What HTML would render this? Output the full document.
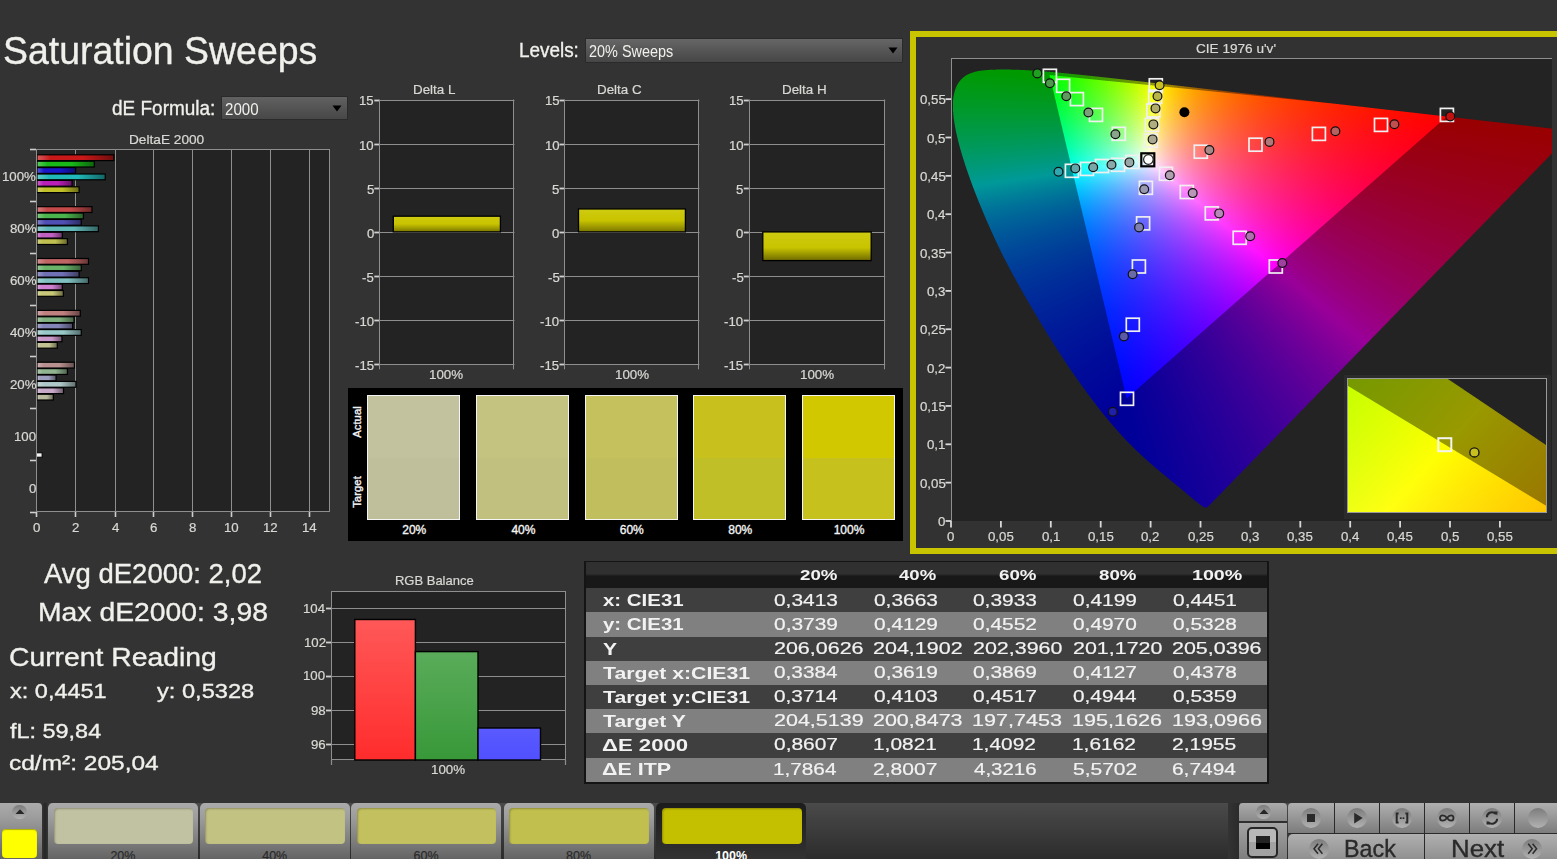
<!DOCTYPE html>
<html><head><meta charset="utf-8"><style>
*{margin:0;padding:0;box-sizing:border-box}
html,body{width:1557px;height:859px;overflow:hidden;background:#333333;font-family:"Liberation Sans", sans-serif;position:relative}
.t{position:absolute;white-space:nowrap}
.b{-webkit-text-stroke:0.35px currentColor}
.b2{-webkit-text-stroke:0.2px currentColor}
</style></head>
<body>
<div class="t b" style="left:2.52px;top:32.19px;font-size:38.52px;line-height:38.52px;color:#f0f0ec;font-weight:normal;transform:scaleX(0.9720);transform-origin:0 0;">Saturation Sweeps</div>
<div class="t b" style="left:111.74px;top:97.65px;font-size:20.49px;line-height:20.49px;color:#f0f0ec;font-weight:normal;transform:scaleX(0.9264);transform-origin:0 0;">dE Formula:</div>
<div style="position:absolute;left:220.50px;top:95.50px;width:127.00px;height:24.00px;background:linear-gradient(#616161,#474747);border:1px solid #2a2a2a;"></div>
<div class="t " style="left:224.75px;top:100.80px;font-size:16.42px;line-height:16.42px;color:#f0f0ec;font-weight:normal;transform:scaleX(0.9190);transform-origin:0 0;">2000</div>
<svg style="position:absolute;left:332px;top:104.5px" width="10" height="7"><path d="M0.5 0.5H9.5L5 6.5Z" fill="#000"/></svg>
<div class="t b" style="left:519.49px;top:40.00px;font-size:20.20px;line-height:20.20px;color:#f0f0ec;font-weight:normal;transform:scaleX(0.9355);transform-origin:0 0;">Levels:</div>
<div style="position:absolute;left:585.00px;top:38.00px;width:318.00px;height:25.00px;background:linear-gradient(#666,#464646);border:1px solid #2a2a2a;"></div>
<div class="t " style="left:588.78px;top:43.81px;font-size:15.70px;line-height:15.70px;color:#f0f0ec;font-weight:normal;transform:scaleX(0.9195);transform-origin:0 0;">20% Sweeps</div>
<svg style="position:absolute;left:888px;top:47px" width="10" height="7"><path d="M0.5 0.5H9.5L5 6.5Z" fill="#000"/></svg>
<div class="t b2" style="left:128.61px;top:134.17px;font-size:12.79px;line-height:12.79px;color:#d8d8d4;font-weight:normal;transform:scaleX(1.0690);transform-origin:0 0;">DeltaE 2000</div>
<div style="position:absolute;left:36.00px;top:149.00px;width:294.00px;height:363.00px;background:#232323;"></div>
<svg style="position:absolute;left:0;top:0" width="1557" height="600">
<defs><linearGradient id="g00" x1="0" x2="1" y1="0" y2="0"><stop offset="0" stop-color="#d85d5d"/><stop offset="0.18" stop-color="#c81818"/><stop offset="0.6" stop-color="#c81818"/><stop offset="1" stop-color="#6e0d0d"/></linearGradient><linearGradient id="g01" x1="0" x2="1" y1="0" y2="0"><stop offset="0" stop-color="#5dcd5d"/><stop offset="0.18" stop-color="#18b818"/><stop offset="0.6" stop-color="#18b818"/><stop offset="1" stop-color="#0d650d"/></linearGradient><linearGradient id="g02" x1="0" x2="1" y1="0" y2="0"><stop offset="0" stop-color="#5d5dd8"/><stop offset="0.18" stop-color="#1818c8"/><stop offset="0.6" stop-color="#1818c8"/><stop offset="1" stop-color="#0d0d6e"/></linearGradient><linearGradient id="g03" x1="0" x2="1" y1="0" y2="0"><stop offset="0" stop-color="#63cdcd"/><stop offset="0.18" stop-color="#20b8b8"/><stop offset="0.6" stop-color="#20b8b8"/><stop offset="1" stop-color="#126565"/></linearGradient><linearGradient id="g04" x1="0" x2="1" y1="0" y2="0"><stop offset="0" stop-color="#cd63cd"/><stop offset="0.18" stop-color="#b820b8"/><stop offset="0.6" stop-color="#b820b8"/><stop offset="1" stop-color="#651265"/></linearGradient><linearGradient id="g05" x1="0" x2="1" y1="0" y2="0"><stop offset="0" stop-color="#d3d368"/><stop offset="0.18" stop-color="#c0c028"/><stop offset="0.6" stop-color="#c0c028"/><stop offset="1" stop-color="#6a6a16"/></linearGradient><linearGradient id="g10" x1="0" x2="1" y1="0" y2="0"><stop offset="0" stop-color="#d68080"/><stop offset="0.18" stop-color="#c44a4a"/><stop offset="0.6" stop-color="#c44a4a"/><stop offset="1" stop-color="#6c2929"/></linearGradient><linearGradient id="g11" x1="0" x2="1" y1="0" y2="0"><stop offset="0" stop-color="#82ca82"/><stop offset="0.18" stop-color="#4cb44c"/><stop offset="0.6" stop-color="#4cb44c"/><stop offset="1" stop-color="#2a632a"/></linearGradient><linearGradient id="g12" x1="0" x2="1" y1="0" y2="0"><stop offset="0" stop-color="#8484ca"/><stop offset="0.18" stop-color="#5050b4"/><stop offset="0.6" stop-color="#5050b4"/><stop offset="1" stop-color="#2c2c63"/></linearGradient><linearGradient id="g13" x1="0" x2="1" y1="0" y2="0"><stop offset="0" stop-color="#90cdcd"/><stop offset="0.18" stop-color="#60b8b8"/><stop offset="0.6" stop-color="#60b8b8"/><stop offset="1" stop-color="#356565"/></linearGradient><linearGradient id="g14" x1="0" x2="1" y1="0" y2="0"><stop offset="0" stop-color="#d390d3"/><stop offset="0.18" stop-color="#c060c0"/><stop offset="0.6" stop-color="#c060c0"/><stop offset="1" stop-color="#6a356a"/></linearGradient><linearGradient id="g15" x1="0" x2="1" y1="0" y2="0"><stop offset="0" stop-color="#d3d384"/><stop offset="0.18" stop-color="#c0c050"/><stop offset="0.6" stop-color="#c0c050"/><stop offset="1" stop-color="#6a6a2c"/></linearGradient><linearGradient id="g20" x1="0" x2="1" y1="0" y2="0"><stop offset="0" stop-color="#d39292"/><stop offset="0.18" stop-color="#c06464"/><stop offset="0.6" stop-color="#c06464"/><stop offset="1" stop-color="#6a3737"/></linearGradient><linearGradient id="g21" x1="0" x2="1" y1="0" y2="0"><stop offset="0" stop-color="#97ca97"/><stop offset="0.18" stop-color="#6ab46a"/><stop offset="0.6" stop-color="#6ab46a"/><stop offset="1" stop-color="#3a633a"/></linearGradient><linearGradient id="g22" x1="0" x2="1" y1="0" y2="0"><stop offset="0" stop-color="#9b9bca"/><stop offset="0.18" stop-color="#7070b4"/><stop offset="0.6" stop-color="#7070b4"/><stop offset="1" stop-color="#3e3e63"/></linearGradient><linearGradient id="g23" x1="0" x2="1" y1="0" y2="0"><stop offset="0" stop-color="#a6d3d3"/><stop offset="0.18" stop-color="#80c0c0"/><stop offset="0.6" stop-color="#80c0c0"/><stop offset="1" stop-color="#466a6a"/></linearGradient><linearGradient id="g24" x1="0" x2="1" y1="0" y2="0"><stop offset="0" stop-color="#dea6de"/><stop offset="0.18" stop-color="#d080d0"/><stop offset="0.6" stop-color="#d080d0"/><stop offset="1" stop-color="#724672"/></linearGradient><linearGradient id="g25" x1="0" x2="1" y1="0" y2="0"><stop offset="0" stop-color="#d8d8a0"/><stop offset="0.18" stop-color="#c8c878"/><stop offset="0.6" stop-color="#c8c878"/><stop offset="1" stop-color="#6e6e42"/></linearGradient><linearGradient id="g30" x1="0" x2="1" y1="0" y2="0"><stop offset="0" stop-color="#d3a6a6"/><stop offset="0.18" stop-color="#c08080"/><stop offset="0.6" stop-color="#c08080"/><stop offset="1" stop-color="#6a4646"/></linearGradient><linearGradient id="g31" x1="0" x2="1" y1="0" y2="0"><stop offset="0" stop-color="#a6c8a6"/><stop offset="0.18" stop-color="#80b080"/><stop offset="0.6" stop-color="#80b080"/><stop offset="1" stop-color="#466146"/></linearGradient><linearGradient id="g32" x1="0" x2="1" y1="0" y2="0"><stop offset="0" stop-color="#a9a9cd"/><stop offset="0.18" stop-color="#8484b8"/><stop offset="0.6" stop-color="#8484b8"/><stop offset="1" stop-color="#494965"/></linearGradient><linearGradient id="g33" x1="0" x2="1" y1="0" y2="0"><stop offset="0" stop-color="#b7d8d8"/><stop offset="0.18" stop-color="#98c8c8"/><stop offset="0.6" stop-color="#98c8c8"/><stop offset="1" stop-color="#546e6e"/></linearGradient><linearGradient id="g34" x1="0" x2="1" y1="0" y2="0"><stop offset="0" stop-color="#d8b7d8"/><stop offset="0.18" stop-color="#c898c8"/><stop offset="0.6" stop-color="#c898c8"/><stop offset="1" stop-color="#6e546e"/></linearGradient><linearGradient id="g35" x1="0" x2="1" y1="0" y2="0"><stop offset="0" stop-color="#d3d3b1"/><stop offset="0.18" stop-color="#c0c090"/><stop offset="0.6" stop-color="#c0c090"/><stop offset="1" stop-color="#6a6a4f"/></linearGradient><linearGradient id="g40" x1="0" x2="1" y1="0" y2="0"><stop offset="0" stop-color="#cdb1b1"/><stop offset="0.18" stop-color="#b89090"/><stop offset="0.6" stop-color="#b89090"/><stop offset="1" stop-color="#654f4f"/></linearGradient><linearGradient id="g41" x1="0" x2="1" y1="0" y2="0"><stop offset="0" stop-color="#b1cab1"/><stop offset="0.18" stop-color="#90b490"/><stop offset="0.6" stop-color="#90b490"/><stop offset="1" stop-color="#4f634f"/></linearGradient><linearGradient id="g42" x1="0" x2="1" y1="0" y2="0"><stop offset="0" stop-color="#babad0"/><stop offset="0.18" stop-color="#9c9cbc"/><stop offset="0.6" stop-color="#9c9cbc"/><stop offset="1" stop-color="#565667"/></linearGradient><linearGradient id="g43" x1="0" x2="1" y1="0" y2="0"><stop offset="0" stop-color="#c8d8d8"/><stop offset="0.18" stop-color="#b0c8c8"/><stop offset="0.6" stop-color="#b0c8c8"/><stop offset="1" stop-color="#616e6e"/></linearGradient><linearGradient id="g44" x1="0" x2="1" y1="0" y2="0"><stop offset="0" stop-color="#d8c2d8"/><stop offset="0.18" stop-color="#c8a8c8"/><stop offset="0.6" stop-color="#c8a8c8"/><stop offset="1" stop-color="#6e5c6e"/></linearGradient><linearGradient id="g45" x1="0" x2="1" y1="0" y2="0"><stop offset="0" stop-color="#cdcdba"/><stop offset="0.18" stop-color="#b8b89c"/><stop offset="0.6" stop-color="#b8b89c"/><stop offset="1" stop-color="#656556"/></linearGradient></defs>
<line x1="75.5" y1="149" x2="75.5" y2="512" stroke="#8e8e8e" stroke-width="1"/>
<line x1="115.5" y1="149" x2="115.5" y2="512" stroke="#8e8e8e" stroke-width="1"/>
<line x1="153.5" y1="149" x2="153.5" y2="512" stroke="#8e8e8e" stroke-width="1"/>
<line x1="192.5" y1="149" x2="192.5" y2="512" stroke="#8e8e8e" stroke-width="1"/>
<line x1="231.5" y1="149" x2="231.5" y2="512" stroke="#8e8e8e" stroke-width="1"/>
<line x1="270.5" y1="149" x2="270.5" y2="512" stroke="#8e8e8e" stroke-width="1"/>
<line x1="309.5" y1="149" x2="309.5" y2="512" stroke="#8e8e8e" stroke-width="1"/>
<rect x="36.5" y="149.5" width="293" height="362" fill="none" stroke="#8e8e8e" stroke-width="1"/>
<line x1="30" y1="149.5" x2="36" y2="149.5" stroke="#cfcfcf" stroke-width="1.6"/>
<line x1="30" y1="201.5" x2="36" y2="201.5" stroke="#cfcfcf" stroke-width="1.6"/>
<line x1="30" y1="253.5" x2="36" y2="253.5" stroke="#cfcfcf" stroke-width="1.6"/>
<line x1="30" y1="305.5" x2="36" y2="305.5" stroke="#cfcfcf" stroke-width="1.6"/>
<line x1="30" y1="356.5" x2="36" y2="356.5" stroke="#cfcfcf" stroke-width="1.6"/>
<line x1="30" y1="408.5" x2="36" y2="408.5" stroke="#cfcfcf" stroke-width="1.6"/>
<line x1="30" y1="460.5" x2="36" y2="460.5" stroke="#cfcfcf" stroke-width="1.6"/>
<line x1="30" y1="512.5" x2="36" y2="512.5" stroke="#cfcfcf" stroke-width="1.6"/>
<line x1="36.5" y1="512" x2="36.5" y2="517" stroke="#cfcfcf" stroke-width="1.6"/>
<line x1="75.5" y1="512" x2="75.5" y2="517" stroke="#cfcfcf" stroke-width="1.6"/>
<line x1="115.5" y1="512" x2="115.5" y2="517" stroke="#cfcfcf" stroke-width="1.6"/>
<line x1="153.5" y1="512" x2="153.5" y2="517" stroke="#cfcfcf" stroke-width="1.6"/>
<line x1="192.5" y1="512" x2="192.5" y2="517" stroke="#cfcfcf" stroke-width="1.6"/>
<line x1="231.5" y1="512" x2="231.5" y2="517" stroke="#cfcfcf" stroke-width="1.6"/>
<line x1="270.5" y1="512" x2="270.5" y2="517" stroke="#cfcfcf" stroke-width="1.6"/>
<line x1="309.5" y1="512" x2="309.5" y2="517" stroke="#cfcfcf" stroke-width="1.6"/>
<rect x="37.0" y="154.80" width="76.83" height="5.80" fill="url(#g00)" stroke="#000" stroke-width="1.2"/>
<rect x="37.0" y="161.20" width="57.33" height="5.80" fill="url(#g01)" stroke="#000" stroke-width="1.2"/>
<rect x="37.0" y="167.60" width="38.61" height="5.80" fill="url(#g02)" stroke="#000" stroke-width="1.2"/>
<rect x="37.0" y="174.00" width="68.25" height="5.80" fill="url(#g03)" stroke="#000" stroke-width="1.2"/>
<rect x="37.0" y="180.40" width="35.10" height="5.80" fill="url(#g04)" stroke="#000" stroke-width="1.2"/>
<rect x="37.0" y="186.80" width="42.12" height="5.80" fill="url(#g05)" stroke="#000" stroke-width="1.2"/>
<rect x="37.0" y="206.66" width="54.99" height="5.80" fill="url(#g10)" stroke="#000" stroke-width="1.2"/>
<rect x="37.0" y="213.06" width="46.41" height="5.80" fill="url(#g11)" stroke="#000" stroke-width="1.2"/>
<rect x="37.0" y="219.46" width="44.27" height="5.80" fill="url(#g12)" stroke="#000" stroke-width="1.2"/>
<rect x="37.0" y="225.86" width="61.42" height="5.80" fill="url(#g13)" stroke="#000" stroke-width="1.2"/>
<rect x="37.0" y="232.26" width="25.35" height="5.80" fill="url(#g14)" stroke="#000" stroke-width="1.2"/>
<rect x="37.0" y="238.66" width="30.42" height="5.80" fill="url(#g15)" stroke="#000" stroke-width="1.2"/>
<rect x="37.0" y="258.51" width="51.48" height="5.80" fill="url(#g20)" stroke="#000" stroke-width="1.2"/>
<rect x="37.0" y="264.91" width="44.27" height="5.80" fill="url(#g21)" stroke="#000" stroke-width="1.2"/>
<rect x="37.0" y="271.31" width="42.12" height="5.80" fill="url(#g22)" stroke="#000" stroke-width="1.2"/>
<rect x="37.0" y="277.71" width="51.48" height="5.80" fill="url(#g23)" stroke="#000" stroke-width="1.2"/>
<rect x="37.0" y="284.11" width="25.35" height="5.80" fill="url(#g24)" stroke="#000" stroke-width="1.2"/>
<rect x="37.0" y="290.51" width="26.33" height="5.80" fill="url(#g25)" stroke="#000" stroke-width="1.2"/>
<rect x="37.0" y="310.37" width="43.29" height="5.80" fill="url(#g30)" stroke="#000" stroke-width="1.2"/>
<rect x="37.0" y="316.77" width="37.05" height="5.80" fill="url(#g31)" stroke="#000" stroke-width="1.2"/>
<rect x="37.0" y="323.17" width="35.69" height="5.80" fill="url(#g32)" stroke="#000" stroke-width="1.2"/>
<rect x="37.0" y="329.57" width="44.27" height="5.80" fill="url(#g33)" stroke="#000" stroke-width="1.2"/>
<rect x="37.0" y="335.97" width="24.96" height="5.80" fill="url(#g34)" stroke="#000" stroke-width="1.2"/>
<rect x="37.0" y="342.37" width="20.28" height="5.80" fill="url(#g35)" stroke="#000" stroke-width="1.2"/>
<rect x="37.0" y="362.23" width="37.44" height="5.80" fill="url(#g40)" stroke="#000" stroke-width="1.2"/>
<rect x="37.0" y="368.63" width="30.42" height="5.80" fill="url(#g41)" stroke="#000" stroke-width="1.2"/>
<rect x="37.0" y="375.03" width="19.11" height="5.80" fill="url(#g42)" stroke="#000" stroke-width="1.2"/>
<rect x="37.0" y="381.43" width="39.00" height="5.80" fill="url(#g43)" stroke="#000" stroke-width="1.2"/>
<rect x="37.0" y="387.83" width="26.52" height="5.80" fill="url(#g44)" stroke="#000" stroke-width="1.2"/>
<rect x="37.0" y="394.23" width="16.38" height="5.80" fill="url(#g45)" stroke="#000" stroke-width="1.2"/>
<rect x="36.5" y="452.8" width="5.6" height="4.4" fill="#f4f4f4" stroke="#000" stroke-width="1"/>
<line x1="36.5" y1="149" x2="36.5" y2="512" stroke="#8e8e8e" stroke-width="1"/>
</svg>
<div class="t b2" style="left:2.10px;top:171.43px;font-size:12.40px;line-height:12.40px;color:#d8d8d4;font-weight:normal;transform:scaleX(1.0700);transform-origin:0 0;">100%</div>
<div class="t b2" style="left:9.53px;top:223.29px;font-size:12.40px;line-height:12.40px;color:#d8d8d4;font-weight:normal;transform:scaleX(1.0700);transform-origin:0 0;">80%</div>
<div class="t b2" style="left:9.53px;top:275.15px;font-size:12.40px;line-height:12.40px;color:#d8d8d4;font-weight:normal;transform:scaleX(1.0700);transform-origin:0 0;">60%</div>
<div class="t b2" style="left:9.53px;top:327.00px;font-size:12.40px;line-height:12.40px;color:#d8d8d4;font-weight:normal;transform:scaleX(1.0700);transform-origin:0 0;">40%</div>
<div class="t b2" style="left:9.53px;top:378.86px;font-size:12.40px;line-height:12.40px;color:#d8d8d4;font-weight:normal;transform:scaleX(1.0700);transform-origin:0 0;">20%</div>
<div class="t b2" style="left:13.97px;top:430.72px;font-size:12.40px;line-height:12.40px;color:#d8d8d4;font-weight:normal;transform:scaleX(1.0700);transform-origin:0 0;">100</div>
<div class="t b2" style="left:28.70px;top:482.57px;font-size:12.40px;line-height:12.40px;color:#d8d8d4;font-weight:normal;transform:scaleX(1.0700);transform-origin:0 0;">0</div>
<div class="t b2" style="left:32.82px;top:522.00px;font-size:12.40px;line-height:12.40px;color:#d8d8d4;font-weight:normal;transform:scaleX(1.0700);transform-origin:0 0;">0</div>
<div class="t b2" style="left:71.78px;top:522.00px;font-size:12.40px;line-height:12.40px;color:#d8d8d4;font-weight:normal;transform:scaleX(1.0700);transform-origin:0 0;">2</div>
<div class="t b2" style="left:111.85px;top:522.00px;font-size:12.40px;line-height:12.40px;color:#d8d8d4;font-weight:normal;transform:scaleX(1.0700);transform-origin:0 0;">4</div>
<div class="t b2" style="left:149.75px;top:522.00px;font-size:12.40px;line-height:12.40px;color:#d8d8d4;font-weight:normal;transform:scaleX(1.0700);transform-origin:0 0;">6</div>
<div class="t b2" style="left:188.82px;top:522.00px;font-size:12.40px;line-height:12.40px;color:#d8d8d4;font-weight:normal;transform:scaleX(1.0700);transform-origin:0 0;">8</div>
<div class="t b2" style="left:223.87px;top:522.00px;font-size:12.40px;line-height:12.40px;color:#d8d8d4;font-weight:normal;transform:scaleX(1.0700);transform-origin:0 0;">10</div>
<div class="t b2" style="left:262.94px;top:522.00px;font-size:12.40px;line-height:12.40px;color:#d8d8d4;font-weight:normal;transform:scaleX(1.0700);transform-origin:0 0;">12</div>
<div class="t b2" style="left:301.80px;top:522.00px;font-size:12.40px;line-height:12.40px;color:#d8d8d4;font-weight:normal;transform:scaleX(1.0700);transform-origin:0 0;">14</div>
<div style="position:absolute;left:379.3px;top:99.5px;width:135.09999999999997px;height:264.8px;background:#232323"></div>
<div style="position:absolute;left:564.5px;top:99.5px;width:134.89999999999998px;height:264.8px;background:#232323"></div>
<div style="position:absolute;left:748.8px;top:99.5px;width:136.4000000000001px;height:264.8px;background:#232323"></div>
<div class="t b2" style="left:413.08px;top:83.40px;font-size:13.00px;line-height:13.00px;color:#d8d8d4;font-weight:normal;transform:scaleX(1.0300);transform-origin:0 0;">Delta L</div>
<div class="t b2" style="left:359.40px;top:95.37px;font-size:12.20px;line-height:12.20px;color:#d8d8d4;font-weight:normal;transform:scaleX(1.0800);transform-origin:0 0;">15</div>
<div class="t b2" style="left:359.34px;top:139.51px;font-size:12.20px;line-height:12.20px;color:#d8d8d4;font-weight:normal;transform:scaleX(1.0800);transform-origin:0 0;">10</div>
<div class="t b2" style="left:366.71px;top:183.64px;font-size:12.20px;line-height:12.20px;color:#d8d8d4;font-weight:normal;transform:scaleX(1.0800);transform-origin:0 0;">5</div>
<div class="t b2" style="left:366.65px;top:227.77px;font-size:12.20px;line-height:12.20px;color:#d8d8d4;font-weight:normal;transform:scaleX(1.0800);transform-origin:0 0;">0</div>
<div class="t b2" style="left:362.30px;top:271.91px;font-size:12.20px;line-height:12.20px;color:#d8d8d4;font-weight:normal;transform:scaleX(1.0800);transform-origin:0 0;">-5</div>
<div class="t b2" style="left:354.92px;top:316.04px;font-size:12.20px;line-height:12.20px;color:#d8d8d4;font-weight:normal;transform:scaleX(1.0800);transform-origin:0 0;">-10</div>
<div class="t b2" style="left:354.99px;top:360.17px;font-size:12.20px;line-height:12.20px;color:#d8d8d4;font-weight:normal;transform:scaleX(1.0800);transform-origin:0 0;">-15</div>
<div class="t b2" style="left:429.49px;top:368.53px;font-size:12.60px;line-height:12.60px;color:#d8d8d4;font-weight:normal;transform:scaleX(1.0600);transform-origin:0 0;">100%</div>
<div class="t b2" style="left:597.00px;top:83.40px;font-size:13.00px;line-height:13.00px;color:#d8d8d4;font-weight:normal;transform:scaleX(1.0300);transform-origin:0 0;">Delta C</div>
<div class="t b2" style="left:544.60px;top:95.37px;font-size:12.20px;line-height:12.20px;color:#d8d8d4;font-weight:normal;transform:scaleX(1.0800);transform-origin:0 0;">15</div>
<div class="t b2" style="left:544.54px;top:139.51px;font-size:12.20px;line-height:12.20px;color:#d8d8d4;font-weight:normal;transform:scaleX(1.0800);transform-origin:0 0;">10</div>
<div class="t b2" style="left:551.91px;top:183.64px;font-size:12.20px;line-height:12.20px;color:#d8d8d4;font-weight:normal;transform:scaleX(1.0800);transform-origin:0 0;">5</div>
<div class="t b2" style="left:551.85px;top:227.77px;font-size:12.20px;line-height:12.20px;color:#d8d8d4;font-weight:normal;transform:scaleX(1.0800);transform-origin:0 0;">0</div>
<div class="t b2" style="left:547.50px;top:271.91px;font-size:12.20px;line-height:12.20px;color:#d8d8d4;font-weight:normal;transform:scaleX(1.0800);transform-origin:0 0;">-5</div>
<div class="t b2" style="left:540.12px;top:316.04px;font-size:12.20px;line-height:12.20px;color:#d8d8d4;font-weight:normal;transform:scaleX(1.0800);transform-origin:0 0;">-10</div>
<div class="t b2" style="left:540.19px;top:360.17px;font-size:12.20px;line-height:12.20px;color:#d8d8d4;font-weight:normal;transform:scaleX(1.0800);transform-origin:0 0;">-15</div>
<div class="t b2" style="left:614.59px;top:368.53px;font-size:12.60px;line-height:12.60px;color:#d8d8d4;font-weight:normal;transform:scaleX(1.0600);transform-origin:0 0;">100%</div>
<div class="t b2" style="left:782.17px;top:83.40px;font-size:13.00px;line-height:13.00px;color:#d8d8d4;font-weight:normal;transform:scaleX(1.0300);transform-origin:0 0;">Delta H</div>
<div class="t b2" style="left:728.90px;top:95.37px;font-size:12.20px;line-height:12.20px;color:#d8d8d4;font-weight:normal;transform:scaleX(1.0800);transform-origin:0 0;">15</div>
<div class="t b2" style="left:728.84px;top:139.51px;font-size:12.20px;line-height:12.20px;color:#d8d8d4;font-weight:normal;transform:scaleX(1.0800);transform-origin:0 0;">10</div>
<div class="t b2" style="left:736.21px;top:183.64px;font-size:12.20px;line-height:12.20px;color:#d8d8d4;font-weight:normal;transform:scaleX(1.0800);transform-origin:0 0;">5</div>
<div class="t b2" style="left:736.15px;top:227.77px;font-size:12.20px;line-height:12.20px;color:#d8d8d4;font-weight:normal;transform:scaleX(1.0800);transform-origin:0 0;">0</div>
<div class="t b2" style="left:731.80px;top:271.91px;font-size:12.20px;line-height:12.20px;color:#d8d8d4;font-weight:normal;transform:scaleX(1.0800);transform-origin:0 0;">-5</div>
<div class="t b2" style="left:724.42px;top:316.04px;font-size:12.20px;line-height:12.20px;color:#d8d8d4;font-weight:normal;transform:scaleX(1.0800);transform-origin:0 0;">-10</div>
<div class="t b2" style="left:724.49px;top:360.17px;font-size:12.20px;line-height:12.20px;color:#d8d8d4;font-weight:normal;transform:scaleX(1.0800);transform-origin:0 0;">-15</div>
<div class="t b2" style="left:799.64px;top:368.53px;font-size:12.60px;line-height:12.60px;color:#d8d8d4;font-weight:normal;transform:scaleX(1.0600);transform-origin:0 0;">100%</div>
<svg style="position:absolute;left:0;top:0" width="1557" height="600">
<defs><linearGradient id="ybar" x1="0" x2="0" y1="0" y2="1"><stop offset="0" stop-color="#cfcb10"/><stop offset="0.5" stop-color="#c8c400"/><stop offset="1" stop-color="#7a7600"/></linearGradient><linearGradient id="ybarn" x1="0" x2="0" y1="0" y2="1"><stop offset="0" stop-color="#cfcb10"/><stop offset="0.55" stop-color="#c8c400"/><stop offset="1" stop-color="#6e6a00"/></linearGradient></defs>
<line x1="379.3" y1="100.5" x2="514.4" y2="100.5" stroke="#8e8e8e" stroke-width="1"/>
<line x1="374.3" y1="100.5" x2="379.3" y2="100.5" stroke="#d0d0d0" stroke-width="1.8"/>
<line x1="379.3" y1="144.5" x2="514.4" y2="144.5" stroke="#8e8e8e" stroke-width="1"/>
<line x1="374.3" y1="144.5" x2="379.3" y2="144.5" stroke="#d0d0d0" stroke-width="1.8"/>
<line x1="379.3" y1="188.5" x2="514.4" y2="188.5" stroke="#8e8e8e" stroke-width="1"/>
<line x1="374.3" y1="188.5" x2="379.3" y2="188.5" stroke="#d0d0d0" stroke-width="1.8"/>
<line x1="379.3" y1="232.5" x2="514.4" y2="232.5" stroke="#8e8e8e" stroke-width="1"/>
<line x1="374.3" y1="232.5" x2="379.3" y2="232.5" stroke="#d0d0d0" stroke-width="1.8"/>
<line x1="379.3" y1="276.5" x2="514.4" y2="276.5" stroke="#8e8e8e" stroke-width="1"/>
<line x1="374.3" y1="276.5" x2="379.3" y2="276.5" stroke="#d0d0d0" stroke-width="1.8"/>
<line x1="379.3" y1="320.5" x2="514.4" y2="320.5" stroke="#8e8e8e" stroke-width="1"/>
<line x1="374.3" y1="320.5" x2="379.3" y2="320.5" stroke="#d0d0d0" stroke-width="1.8"/>
<line x1="379.3" y1="364.5" x2="514.4" y2="364.5" stroke="#8e8e8e" stroke-width="1"/>
<line x1="374.3" y1="364.5" x2="379.3" y2="364.5" stroke="#d0d0d0" stroke-width="1.8"/>
<line x1="379.5" y1="99.5" x2="379.5" y2="369.3" stroke="#8e8e8e" stroke-width="1"/>
<line x1="513.5" y1="99.5" x2="513.5" y2="369.3" stroke="#8e8e8e" stroke-width="1"/>
<rect x="393.30" y="216.19" width="107.10" height="15.71" fill="url(#ybar)" stroke="#000" stroke-width="1.3"/>
<line x1="564.5" y1="100.5" x2="699.4" y2="100.5" stroke="#8e8e8e" stroke-width="1"/>
<line x1="559.5" y1="100.5" x2="564.5" y2="100.5" stroke="#d0d0d0" stroke-width="1.8"/>
<line x1="564.5" y1="144.5" x2="699.4" y2="144.5" stroke="#8e8e8e" stroke-width="1"/>
<line x1="559.5" y1="144.5" x2="564.5" y2="144.5" stroke="#d0d0d0" stroke-width="1.8"/>
<line x1="564.5" y1="188.5" x2="699.4" y2="188.5" stroke="#8e8e8e" stroke-width="1"/>
<line x1="559.5" y1="188.5" x2="564.5" y2="188.5" stroke="#d0d0d0" stroke-width="1.8"/>
<line x1="564.5" y1="232.5" x2="699.4" y2="232.5" stroke="#8e8e8e" stroke-width="1"/>
<line x1="559.5" y1="232.5" x2="564.5" y2="232.5" stroke="#d0d0d0" stroke-width="1.8"/>
<line x1="564.5" y1="276.5" x2="699.4" y2="276.5" stroke="#8e8e8e" stroke-width="1"/>
<line x1="559.5" y1="276.5" x2="564.5" y2="276.5" stroke="#d0d0d0" stroke-width="1.8"/>
<line x1="564.5" y1="320.5" x2="699.4" y2="320.5" stroke="#8e8e8e" stroke-width="1"/>
<line x1="559.5" y1="320.5" x2="564.5" y2="320.5" stroke="#d0d0d0" stroke-width="1.8"/>
<line x1="564.5" y1="364.5" x2="699.4" y2="364.5" stroke="#8e8e8e" stroke-width="1"/>
<line x1="559.5" y1="364.5" x2="564.5" y2="364.5" stroke="#d0d0d0" stroke-width="1.8"/>
<line x1="564.5" y1="99.5" x2="564.5" y2="369.3" stroke="#8e8e8e" stroke-width="1"/>
<line x1="698.5" y1="99.5" x2="698.5" y2="369.3" stroke="#8e8e8e" stroke-width="1"/>
<rect x="578.50" y="208.95" width="106.90" height="22.95" fill="url(#ybar)" stroke="#000" stroke-width="1.3"/>
<line x1="748.8" y1="100.5" x2="885.2" y2="100.5" stroke="#8e8e8e" stroke-width="1"/>
<line x1="743.8" y1="100.5" x2="748.8" y2="100.5" stroke="#d0d0d0" stroke-width="1.8"/>
<line x1="748.8" y1="144.5" x2="885.2" y2="144.5" stroke="#8e8e8e" stroke-width="1"/>
<line x1="743.8" y1="144.5" x2="748.8" y2="144.5" stroke="#d0d0d0" stroke-width="1.8"/>
<line x1="748.8" y1="188.5" x2="885.2" y2="188.5" stroke="#8e8e8e" stroke-width="1"/>
<line x1="743.8" y1="188.5" x2="748.8" y2="188.5" stroke="#d0d0d0" stroke-width="1.8"/>
<line x1="748.8" y1="232.5" x2="885.2" y2="232.5" stroke="#8e8e8e" stroke-width="1"/>
<line x1="743.8" y1="232.5" x2="748.8" y2="232.5" stroke="#d0d0d0" stroke-width="1.8"/>
<line x1="748.8" y1="276.5" x2="885.2" y2="276.5" stroke="#8e8e8e" stroke-width="1"/>
<line x1="743.8" y1="276.5" x2="748.8" y2="276.5" stroke="#d0d0d0" stroke-width="1.8"/>
<line x1="748.8" y1="320.5" x2="885.2" y2="320.5" stroke="#8e8e8e" stroke-width="1"/>
<line x1="743.8" y1="320.5" x2="748.8" y2="320.5" stroke="#d0d0d0" stroke-width="1.8"/>
<line x1="748.8" y1="364.5" x2="885.2" y2="364.5" stroke="#8e8e8e" stroke-width="1"/>
<line x1="743.8" y1="364.5" x2="748.8" y2="364.5" stroke="#d0d0d0" stroke-width="1.8"/>
<line x1="749.5" y1="99.5" x2="749.5" y2="369.3" stroke="#8e8e8e" stroke-width="1"/>
<line x1="884.5" y1="99.5" x2="884.5" y2="369.3" stroke="#8e8e8e" stroke-width="1"/>
<rect x="762.80" y="231.90" width="108.40" height="28.69" fill="url(#ybarn)" stroke="#000" stroke-width="1.3"/>
</svg>
<div style="position:absolute;left:348.00px;top:388.00px;width:555.00px;height:152.50px;background:#000;"></div>
<div style="position:absolute;left:367.00px;top:395.00px;width:93.00px;height:125.00px;border:1px solid #f4f4f4;background:linear-gradient(#c3c29f 0,#c3c29f 50%,#c0bf9b 50%,#c0bf9b 100%);"></div>
<div class="t b" style="left:402.21px;top:523.64px;font-size:12.00px;line-height:12.00px;color:#f4f4f4;font-weight:normal;transform:scaleX(1.0000);transform-origin:0 0;">20%</div>
<div style="position:absolute;left:476.00px;top:395.00px;width:93.00px;height:125.00px;border:1px solid #f4f4f4;background:linear-gradient(#c4c380 0,#c4c380 50%,#c1c07e 50%,#c1c07e 100%);"></div>
<div class="t b" style="left:511.39px;top:523.64px;font-size:12.00px;line-height:12.00px;color:#f4f4f4;font-weight:normal;transform:scaleX(1.0000);transform-origin:0 0;">40%</div>
<div style="position:absolute;left:584.50px;top:395.00px;width:93.00px;height:125.00px;border:1px solid #f4f4f4;background:linear-gradient(#c5c25d 0,#c5c25d 50%,#c1be5d 50%,#c1be5d 100%);"></div>
<div class="t b" style="left:619.71px;top:523.64px;font-size:12.00px;line-height:12.00px;color:#f4f4f4;font-weight:normal;transform:scaleX(1.0000);transform-origin:0 0;">60%</div>
<div style="position:absolute;left:693.00px;top:395.00px;width:93.00px;height:125.00px;border:1px solid #f4f4f4;background:linear-gradient(#c7c01d 0,#c7c01d 50%,#c1bf28 50%,#c1bf28 100%);"></div>
<div class="t b" style="left:728.27px;top:523.64px;font-size:12.00px;line-height:12.00px;color:#f4f4f4;font-weight:normal;transform:scaleX(1.0000);transform-origin:0 0;">80%</div>
<div style="position:absolute;left:802.00px;top:395.00px;width:93.00px;height:125.00px;border:1px solid #f4f4f4;background:linear-gradient(#d1c800 0,#d1c800 50%,#c6c11c 50%,#c6c11c 100%);"></div>
<div class="t b" style="left:833.70px;top:523.64px;font-size:12.00px;line-height:12.00px;color:#f4f4f4;font-weight:normal;transform:scaleX(1.0000);transform-origin:0 0;">100%</div>
<div class="t b" style="left:350px;top:440px;width:36px;height:13px;font-size:11.4px;line-height:14px;color:#f4f4f4;transform:rotate(-90deg);transform-origin:0 0;text-align:center">Actual</div>
<div class="t b" style="left:350px;top:510px;width:36px;height:13px;font-size:11.4px;line-height:14px;color:#f4f4f4;transform:rotate(-90deg);transform-origin:0 0;text-align:center">Target</div>
<div style="position:absolute;left:910.00px;top:31.00px;width:660.00px;height:523.00px;border:6.5px solid #c9c400;background:#323232;"></div>
<div class="t b2" style="left:1195.52px;top:43.05px;font-size:12.94px;line-height:12.94px;color:#d8d8d4;font-weight:normal;transform:scaleX(1.0507);transform-origin:0 0;">CIE 1976 u'v'</div>
<div style="position:absolute;left:951px;top:58px;width:601px;height:463px;background:#232323;border:1px solid #8e8e8e"></div>
<svg style="position:absolute;left:952px;top:59px" width="600" height="462"><defs><linearGradient id="fr" gradientUnits="userSpaceOnUse" x1="494.9" y1="58.4" x2="128.2" y2="145.7"><stop offset="0" stop-color="#ff0000"/><stop offset="0.55" stop-color="#ff0000" stop-opacity="0.85"/><stop offset="1" stop-color="#000"/></linearGradient><linearGradient id="frd" gradientUnits="userSpaceOnUse" x1="494.9" y1="58.4" x2="128.2" y2="145.7"><stop offset="0" stop-color="#990000"/><stop offset="0.55" stop-color="#990000" stop-opacity="0.85"/><stop offset="1" stop-color="#000"/></linearGradient><linearGradient id="fg" gradientUnits="userSpaceOnUse" x1="97.9" y1="18.4" x2="291.1" y2="237.8"><stop offset="0" stop-color="#00ff00"/><stop offset="0.55" stop-color="#00ff00" stop-opacity="0.85"/><stop offset="1" stop-color="#000"/></linearGradient><linearGradient id="fgd" gradientUnits="userSpaceOnUse" x1="97.9" y1="18.4" x2="291.1" y2="237.8"><stop offset="0" stop-color="#009900"/><stop offset="0.55" stop-color="#009900" stop-opacity="0.85"/><stop offset="1" stop-color="#000"/></linearGradient><linearGradient id="fb" gradientUnits="userSpaceOnUse" x1="174.6" y1="340.4" x2="205.9" y2="29.3"><stop offset="0" stop-color="#0000ff"/><stop offset="0.55" stop-color="#0000ff" stop-opacity="0.85"/><stop offset="1" stop-color="#000"/></linearGradient><linearGradient id="fbd" gradientUnits="userSpaceOnUse" x1="174.6" y1="340.4" x2="205.9" y2="29.3"><stop offset="0" stop-color="#000099"/><stop offset="0.55" stop-color="#000099" stop-opacity="0.85"/><stop offset="1" stop-color="#000"/></linearGradient><clipPath id="cl"><polygon points="255.8,448.8 255.4,449.0 254.7,449.3 253.5,449.3 251.2,448.5 245.1,444.1 233.7,434.6 215.1,419.4 186.8,394.7 143.3,345.7 82.1,253.8 51.5,198.7 27.6,145.7 11.4,101.1 3.0,68.0 0.9,44.9 4.1,29.0 11.8,19.0 22.6,13.8 35.4,11.9 49.5,11.5 78.6,12.3 112.0,15.1 152.3,19.3 201.7,24.8 261.3,31.6 330.4,39.6 402.2,47.8 467.7,55.3 518.7,61.2 554.9,65.4 581.4,68.4 598.8,70.4 609.2,71.6 621.6,73.0"/></clipPath><clipPath id="ct"><polygon points="494.9,58.4 97.9,18.4 174.6,340.4"/></clipPath></defs><g clip-path="url(#cl)"><rect width="600" height="462" fill="#000"/><rect width="600" height="462" fill="url(#frd)" style="mix-blend-mode:screen"/><rect width="600" height="462" fill="url(#fgd)" style="mix-blend-mode:screen"/><rect width="600" height="462" fill="url(#fbd)" style="mix-blend-mode:screen"/></g><g clip-path="url(#ct)" style="isolation:isolate"><rect width="600" height="462" fill="#000"/><rect width="600" height="462" fill="url(#fr)" style="mix-blend-mode:screen"/><rect width="600" height="462" fill="url(#fg)" style="mix-blend-mode:screen"/><rect width="600" height="462" fill="url(#fb)" style="mix-blend-mode:screen"/></g></svg>
<canvas id="cie" width="600" height="462" style="position:absolute;left:952px;top:59px;width:600px;height:462px"></canvas>
<div class="t b2" style="left:937.90px;top:516.10px;font-size:12.40px;line-height:12.40px;color:#d8d8d4;font-weight:normal;transform:scaleX(1.0700);transform-origin:0 0;">0</div>
<div class="t b2" style="left:919.52px;top:477.75px;font-size:12.40px;line-height:12.40px;color:#d8d8d4;font-weight:normal;transform:scaleX(1.0700);transform-origin:0 0;">0,05</div>
<div class="t b2" style="left:926.95px;top:439.40px;font-size:12.40px;line-height:12.40px;color:#d8d8d4;font-weight:normal;transform:scaleX(1.0700);transform-origin:0 0;">0,1</div>
<div class="t b2" style="left:919.52px;top:401.05px;font-size:12.40px;line-height:12.40px;color:#d8d8d4;font-weight:normal;transform:scaleX(1.0700);transform-origin:0 0;">0,15</div>
<div class="t b2" style="left:926.95px;top:362.70px;font-size:12.40px;line-height:12.40px;color:#d8d8d4;font-weight:normal;transform:scaleX(1.0700);transform-origin:0 0;">0,2</div>
<div class="t b2" style="left:919.52px;top:324.35px;font-size:12.40px;line-height:12.40px;color:#d8d8d4;font-weight:normal;transform:scaleX(1.0700);transform-origin:0 0;">0,25</div>
<div class="t b2" style="left:926.89px;top:286.00px;font-size:12.40px;line-height:12.40px;color:#d8d8d4;font-weight:normal;transform:scaleX(1.0700);transform-origin:0 0;">0,3</div>
<div class="t b2" style="left:919.52px;top:247.65px;font-size:12.40px;line-height:12.40px;color:#d8d8d4;font-weight:normal;transform:scaleX(1.0700);transform-origin:0 0;">0,35</div>
<div class="t b2" style="left:926.69px;top:209.30px;font-size:12.40px;line-height:12.40px;color:#d8d8d4;font-weight:normal;transform:scaleX(1.0700);transform-origin:0 0;">0,4</div>
<div class="t b2" style="left:919.52px;top:170.95px;font-size:12.40px;line-height:12.40px;color:#d8d8d4;font-weight:normal;transform:scaleX(1.0700);transform-origin:0 0;">0,45</div>
<div class="t b2" style="left:926.89px;top:132.60px;font-size:12.40px;line-height:12.40px;color:#d8d8d4;font-weight:normal;transform:scaleX(1.0700);transform-origin:0 0;">0,5</div>
<div class="t b2" style="left:919.52px;top:94.25px;font-size:12.40px;line-height:12.40px;color:#d8d8d4;font-weight:normal;transform:scaleX(1.0700);transform-origin:0 0;">0,55</div>
<div class="t b2" style="left:947.32px;top:530.70px;font-size:12.40px;line-height:12.40px;color:#d8d8d4;font-weight:normal;transform:scaleX(1.0700);transform-origin:0 0;">0</div>
<div class="t b2" style="left:988.03px;top:530.70px;font-size:12.40px;line-height:12.40px;color:#d8d8d4;font-weight:normal;transform:scaleX(1.0700);transform-origin:0 0;">0,05</div>
<div class="t b2" style="left:1041.65px;top:530.70px;font-size:12.40px;line-height:12.40px;color:#d8d8d4;font-weight:normal;transform:scaleX(1.0700);transform-origin:0 0;">0,1</div>
<div class="t b2" style="left:1087.83px;top:530.70px;font-size:12.40px;line-height:12.40px;color:#d8d8d4;font-weight:normal;transform:scaleX(1.0700);transform-origin:0 0;">0,15</div>
<div class="t b2" style="left:1141.45px;top:530.70px;font-size:12.40px;line-height:12.40px;color:#d8d8d4;font-weight:normal;transform:scaleX(1.0700);transform-origin:0 0;">0,2</div>
<div class="t b2" style="left:1187.63px;top:530.70px;font-size:12.40px;line-height:12.40px;color:#d8d8d4;font-weight:normal;transform:scaleX(1.0700);transform-origin:0 0;">0,25</div>
<div class="t b2" style="left:1241.21px;top:530.70px;font-size:12.40px;line-height:12.40px;color:#d8d8d4;font-weight:normal;transform:scaleX(1.0700);transform-origin:0 0;">0,3</div>
<div class="t b2" style="left:1287.43px;top:530.70px;font-size:12.40px;line-height:12.40px;color:#d8d8d4;font-weight:normal;transform:scaleX(1.0700);transform-origin:0 0;">0,35</div>
<div class="t b2" style="left:1340.91px;top:530.70px;font-size:12.40px;line-height:12.40px;color:#d8d8d4;font-weight:normal;transform:scaleX(1.0700);transform-origin:0 0;">0,4</div>
<div class="t b2" style="left:1387.23px;top:530.70px;font-size:12.40px;line-height:12.40px;color:#d8d8d4;font-weight:normal;transform:scaleX(1.0700);transform-origin:0 0;">0,45</div>
<div class="t b2" style="left:1440.81px;top:530.70px;font-size:12.40px;line-height:12.40px;color:#d8d8d4;font-weight:normal;transform:scaleX(1.0700);transform-origin:0 0;">0,5</div>
<div class="t b2" style="left:1487.03px;top:530.70px;font-size:12.40px;line-height:12.40px;color:#d8d8d4;font-weight:normal;transform:scaleX(1.0700);transform-origin:0 0;">0,55</div>
<svg style="position:absolute;left:900px;top:0" width="657" height="600">
<line x1="45.5" y1="521.00" x2="51" y2="521.00" stroke="#d8d8d8" stroke-width="1.8"/>
<line x1="45.5" y1="482.65" x2="51" y2="482.65" stroke="#d8d8d8" stroke-width="1.8"/>
<line x1="45.5" y1="444.30" x2="51" y2="444.30" stroke="#d8d8d8" stroke-width="1.8"/>
<line x1="45.5" y1="405.95" x2="51" y2="405.95" stroke="#d8d8d8" stroke-width="1.8"/>
<line x1="45.5" y1="367.60" x2="51" y2="367.60" stroke="#d8d8d8" stroke-width="1.8"/>
<line x1="45.5" y1="329.25" x2="51" y2="329.25" stroke="#d8d8d8" stroke-width="1.8"/>
<line x1="45.5" y1="290.90" x2="51" y2="290.90" stroke="#d8d8d8" stroke-width="1.8"/>
<line x1="45.5" y1="252.55" x2="51" y2="252.55" stroke="#d8d8d8" stroke-width="1.8"/>
<line x1="45.5" y1="214.20" x2="51" y2="214.20" stroke="#d8d8d8" stroke-width="1.8"/>
<line x1="45.5" y1="175.85" x2="51" y2="175.85" stroke="#d8d8d8" stroke-width="1.8"/>
<line x1="45.5" y1="137.50" x2="51" y2="137.50" stroke="#d8d8d8" stroke-width="1.8"/>
<line x1="45.5" y1="99.15" x2="51" y2="99.15" stroke="#d8d8d8" stroke-width="1.8"/>
<line x1="51.00" y1="521" x2="51.00" y2="527.5" stroke="#d8d8d8" stroke-width="1.8"/>
<line x1="100.90" y1="521" x2="100.90" y2="527.5" stroke="#d8d8d8" stroke-width="1.8"/>
<line x1="150.80" y1="521" x2="150.80" y2="527.5" stroke="#d8d8d8" stroke-width="1.8"/>
<line x1="200.70" y1="521" x2="200.70" y2="527.5" stroke="#d8d8d8" stroke-width="1.8"/>
<line x1="250.60" y1="521" x2="250.60" y2="527.5" stroke="#d8d8d8" stroke-width="1.8"/>
<line x1="300.50" y1="521" x2="300.50" y2="527.5" stroke="#d8d8d8" stroke-width="1.8"/>
<line x1="350.40" y1="521" x2="350.40" y2="527.5" stroke="#d8d8d8" stroke-width="1.8"/>
<line x1="400.30" y1="521" x2="400.30" y2="527.5" stroke="#d8d8d8" stroke-width="1.8"/>
<line x1="450.20" y1="521" x2="450.20" y2="527.5" stroke="#d8d8d8" stroke-width="1.8"/>
<line x1="500.10" y1="521" x2="500.10" y2="527.5" stroke="#d8d8d8" stroke-width="1.8"/>
<line x1="550.00" y1="521" x2="550.00" y2="527.5" stroke="#d8d8d8" stroke-width="1.8"/>
<line x1="599.90" y1="521" x2="599.90" y2="527.5" stroke="#d8d8d8" stroke-width="1.8"/>
</svg>
<div style="position:absolute;left:1343.5px;top:375px;width:207px;height:143.5px;background:#2b2b2b"></div>
<svg style="position:absolute;left:1347.5px;top:378.5px" width="198" height="133"><defs><linearGradient id="ib" x1="0" y1="0" x2="1" y2="1"><stop offset="0" stop-color="#b4ff00"/><stop offset="0.5" stop-color="#ffff00"/><stop offset="1" stop-color="#ffc400"/></linearGradient><linearGradient id="id" x1="0" y1="0" x2="1" y2="1"><stop offset="0" stop-color="#6a9000"/><stop offset="0.5" stop-color="#909600"/><stop offset="1" stop-color="#987400"/></linearGradient></defs><rect width="198" height="133" fill="#232323"/><polygon points="0,0 98,0 198,67 198,133 0,133" fill="url(#id)"/><polygon points="0,8 198,126 198,133 0,133" fill="url(#ib)"/></svg>
<canvas id="ins" width="198" height="133" style="position:absolute;left:1347.5px;top:378.5px;width:198px;height:133px"></canvas>
<div style="position:absolute;left:1346.5px;top:377.5px;width:200px;height:135px;border:1px solid #9a9a9a"></div>
<svg style="position:absolute;left:0;top:0" width="1557" height="600">
<rect x="1043.4" y="69.3" width="13" height="13" fill="none" stroke="#f0f0f0" stroke-width="1.7"/>
<rect x="1056.6" y="79.3" width="13" height="13" fill="none" stroke="#f0f0f0" stroke-width="1.7"/>
<rect x="1070.4" y="92.6" width="13" height="13" fill="none" stroke="#f0f0f0" stroke-width="1.7"/>
<rect x="1089.5" y="108.4" width="13" height="13" fill="none" stroke="#f0f0f0" stroke-width="1.7"/>
<rect x="1112.3" y="127.3" width="13" height="13" fill="none" stroke="#f0f0f0" stroke-width="1.7"/>
<rect x="1149.3" y="78.8" width="13" height="13" fill="none" stroke="#f0f0f0" stroke-width="1.7"/>
<rect x="1148.7" y="90.2" width="13" height="13" fill="none" stroke="#f0f0f0" stroke-width="1.7"/>
<rect x="1146.9" y="104.0" width="13" height="13" fill="none" stroke="#f0f0f0" stroke-width="1.7"/>
<rect x="1145.4" y="118.4" width="13" height="13" fill="none" stroke="#f0f0f0" stroke-width="1.7"/>
<rect x="1144.4" y="134.2" width="13" height="13" fill="none" stroke="#f0f0f0" stroke-width="1.7"/>
<rect x="1065.4" y="164.3" width="13" height="13" fill="none" stroke="#f0f0f0" stroke-width="1.7"/>
<rect x="1080.5" y="162.4" width="13" height="13" fill="none" stroke="#f0f0f0" stroke-width="1.7"/>
<rect x="1095.5" y="159.5" width="13" height="13" fill="none" stroke="#f0f0f0" stroke-width="1.7"/>
<rect x="1111.5" y="158.3" width="13" height="13" fill="none" stroke="#f0f0f0" stroke-width="1.7"/>
<rect x="1125.9" y="155.4" width="13" height="13" fill="none" stroke="#f0f0f0" stroke-width="1.7"/>
<rect x="1269.3" y="260.0" width="13" height="13" fill="none" stroke="#f0f0f0" stroke-width="1.7"/>
<rect x="1233.2" y="231.3" width="13" height="13" fill="none" stroke="#f0f0f0" stroke-width="1.7"/>
<rect x="1205.3" y="206.9" width="13" height="13" fill="none" stroke="#f0f0f0" stroke-width="1.7"/>
<rect x="1180.3" y="185.5" width="13" height="13" fill="none" stroke="#f0f0f0" stroke-width="1.7"/>
<rect x="1159.4" y="167.3" width="13" height="13" fill="none" stroke="#f0f0f0" stroke-width="1.7"/>
<rect x="1120.5" y="392.3" width="13" height="13" fill="none" stroke="#f0f0f0" stroke-width="1.7"/>
<rect x="1126.3" y="318.2" width="13" height="13" fill="none" stroke="#f0f0f0" stroke-width="1.7"/>
<rect x="1132.4" y="260.0" width="13" height="13" fill="none" stroke="#f0f0f0" stroke-width="1.7"/>
<rect x="1136.6" y="216.9" width="13" height="13" fill="none" stroke="#f0f0f0" stroke-width="1.7"/>
<rect x="1139.4" y="181.3" width="13" height="13" fill="none" stroke="#f0f0f0" stroke-width="1.7"/>
<rect x="1440.4" y="108.4" width="13" height="13" fill="none" stroke="#f0f0f0" stroke-width="1.7"/>
<rect x="1374.5" y="118.4" width="13" height="13" fill="none" stroke="#f0f0f0" stroke-width="1.7"/>
<rect x="1312.4" y="127.4" width="13" height="13" fill="none" stroke="#f0f0f0" stroke-width="1.7"/>
<rect x="1249.0" y="138.2" width="13" height="13" fill="none" stroke="#f0f0f0" stroke-width="1.7"/>
<rect x="1194.3" y="145.2" width="13" height="13" fill="none" stroke="#f0f0f0" stroke-width="1.7"/>
<circle cx="1037.3" cy="73.4" r="4.4" fill="#20a020" stroke="#111" stroke-width="1.2"/>
<circle cx="1049.9" cy="83.3" r="4.4" fill="#4a9a4a" stroke="#111" stroke-width="1.2"/>
<circle cx="1066.3" cy="96.3" r="4.4" fill="#5e9a5e" stroke="#111" stroke-width="1.2"/>
<circle cx="1088.4" cy="112.5" r="4.4" fill="#7aa07a" stroke="#111" stroke-width="1.2"/>
<circle cx="1115.4" cy="134.3" r="4.4" fill="#8aa48a" stroke="#111" stroke-width="1.2"/>
<circle cx="1159.6" cy="85.3" r="4.4" fill="#c8c020" stroke="#111" stroke-width="1.2"/>
<circle cx="1157.5" cy="96.3" r="4.4" fill="#b8b448" stroke="#111" stroke-width="1.2"/>
<circle cx="1155.5" cy="108.4" r="4.4" fill="#b0ac68" stroke="#111" stroke-width="1.2"/>
<circle cx="1153.4" cy="124.4" r="4.4" fill="#b0ae80" stroke="#111" stroke-width="1.2"/>
<circle cx="1152.6" cy="139.4" r="4.4" fill="#aaa890" stroke="#111" stroke-width="1.2"/>
<circle cx="1058.5" cy="171.7" r="4.4" fill="#30a8b0" stroke="#111" stroke-width="1.2"/>
<circle cx="1075.3" cy="168.4" r="4.4" fill="#60a8a8" stroke="#111" stroke-width="1.2"/>
<circle cx="1093.2" cy="167.3" r="4.4" fill="#78a8a8" stroke="#111" stroke-width="1.2"/>
<circle cx="1111.5" cy="164.8" r="4.4" fill="#88aaaa" stroke="#111" stroke-width="1.2"/>
<circle cx="1129.4" cy="162.4" r="4.4" fill="#98a8a8" stroke="#111" stroke-width="1.2"/>
<circle cx="1282.3" cy="263.0" r="4.4" fill="#a040a0" stroke="#111" stroke-width="1.2"/>
<circle cx="1250.2" cy="236.2" r="4.4" fill="#b070b0" stroke="#111" stroke-width="1.2"/>
<circle cx="1219.2" cy="213.4" r="4.4" fill="#b888b8" stroke="#111" stroke-width="1.2"/>
<circle cx="1192.7" cy="193.1" r="4.4" fill="#b898b8" stroke="#111" stroke-width="1.2"/>
<circle cx="1169.8" cy="175.2" r="4.4" fill="#b0a0b0" stroke="#111" stroke-width="1.2"/>
<circle cx="1112.8" cy="411.8" r="4.4" fill="#2020a8" stroke="#111" stroke-width="1.2"/>
<circle cx="1123.9" cy="336.4" r="4.4" fill="#5a5aa8" stroke="#111" stroke-width="1.2"/>
<circle cx="1132.6" cy="274.2" r="4.4" fill="#6a6aa8" stroke="#111" stroke-width="1.2"/>
<circle cx="1139.1" cy="227.4" r="4.4" fill="#8080b0" stroke="#111" stroke-width="1.2"/>
<circle cx="1144.2" cy="189.2" r="4.4" fill="#9898b0" stroke="#111" stroke-width="1.2"/>
<circle cx="1450.3" cy="116.4" r="4.4" fill="#c01010" stroke="#111" stroke-width="1.2"/>
<circle cx="1394.4" cy="124.3" r="4.4" fill="#c05050" stroke="#111" stroke-width="1.2"/>
<circle cx="1335.4" cy="131.3" r="4.4" fill="#b86060" stroke="#111" stroke-width="1.2"/>
<circle cx="1269.5" cy="141.9" r="4.4" fill="#b07878" stroke="#111" stroke-width="1.2"/>
<circle cx="1209.4" cy="150.1" r="4.4" fill="#aa8888" stroke="#111" stroke-width="1.2"/>
<rect x="1141.3" y="153.3" width="13" height="13" fill="none" stroke="#000" stroke-width="2.2"/>
<circle cx="1148.4" cy="159.5" r="4.8" fill="#fff" stroke="#222" stroke-width="1.2"/>
<circle cx="1184.4" cy="112.2" r="5" fill="#000"/>
<rect x="1438.3" y="438.2" width="13" height="13" fill="none" stroke="#f4f4f4" stroke-width="2"/>
<circle cx="1474.4" cy="452.4" r="4.6" fill="#c8c020" stroke="#111" stroke-width="1.3"/>
</svg>
<div class="t b" style="left:44.20px;top:560.74px;font-size:26.89px;line-height:26.89px;color:#f0f0ec;font-weight:normal;transform:scaleX(1.0225);transform-origin:0 0;">Avg dE2000: 2,02</div>
<div class="t b" style="left:37.73px;top:599.01px;font-size:26.45px;line-height:26.45px;color:#f0f0ec;font-weight:normal;transform:scaleX(1.0714);transform-origin:0 0;">Max dE2000: 3,98</div>
<div class="t b" style="left:9.38px;top:645.04px;font-size:25.00px;line-height:25.00px;color:#f0f0ec;font-weight:normal;transform:scaleX(1.1322);transform-origin:0 0;">Current Reading</div>
<div class="t b" style="left:9.76px;top:681.41px;font-size:20.78px;line-height:20.78px;color:#f0f0ec;font-weight:normal;transform:scaleX(1.1317);transform-origin:0 0;">x: 0,4451</div>
<div class="t b" style="left:156.80px;top:681.41px;font-size:20.78px;line-height:20.78px;color:#f0f0ec;font-weight:normal;transform:scaleX(1.1382);transform-origin:0 0;">y: 0,5328</div>
<div class="t b" style="left:9.77px;top:721.31px;font-size:20.78px;line-height:20.78px;color:#f0f0ec;font-weight:normal;transform:scaleX(1.1282);transform-origin:0 0;">fL: 59,84</div>
<div class="t b" style="left:9.02px;top:753.21px;font-size:20.78px;line-height:20.78px;color:#f0f0ec;font-weight:normal;transform:scaleX(1.1793);transform-origin:0 0;">cd/m²: 205,04</div>
<div style="position:absolute;left:331px;top:590.5px;width:234.5px;height:169.5px;background:#232323;border:1px solid #8e8e8e"></div>
<div class="t b2" style="left:394.95px;top:574.20px;font-size:13.00px;line-height:13.00px;color:#d8d8d4;font-weight:normal;transform:scaleX(1.0000);transform-origin:0 0;">RGB Balance</div>
<svg style="position:absolute;left:0;top:560px" width="600" height="220">
<defs><linearGradient id="rg" x1="0" x2="0" y1="0" y2="1"><stop offset="0" stop-color="#ff5858"/><stop offset="1" stop-color="#ff2c2c"/></linearGradient><linearGradient id="gg" x1="0" x2="0" y1="0" y2="1"><stop offset="0" stop-color="#5aac5a"/><stop offset="1" stop-color="#389838"/></linearGradient><linearGradient id="bg" x1="0" x2="0" y1="0" y2="1"><stop offset="0" stop-color="#5a5aff"/><stop offset="1" stop-color="#5050ff"/></linearGradient></defs>
<line x1="331" y1="48.5" x2="565.5" y2="48.5" stroke="#8e8e8e" stroke-width="1"/>
<line x1="326" y1="48.5" x2="331" y2="48.5" stroke="#d0d0d0" stroke-width="1.8"/>
<line x1="331" y1="82.5" x2="565.5" y2="82.5" stroke="#8e8e8e" stroke-width="1"/>
<line x1="326" y1="82.5" x2="331" y2="82.5" stroke="#d0d0d0" stroke-width="1.8"/>
<line x1="331" y1="116.5" x2="565.5" y2="116.5" stroke="#8e8e8e" stroke-width="1"/>
<line x1="326" y1="116.5" x2="331" y2="116.5" stroke="#d0d0d0" stroke-width="1.8"/>
<line x1="331" y1="150.5" x2="565.5" y2="150.5" stroke="#8e8e8e" stroke-width="1"/>
<line x1="326" y1="150.5" x2="331" y2="150.5" stroke="#d0d0d0" stroke-width="1.8"/>
<line x1="331" y1="184.5" x2="565.5" y2="184.5" stroke="#8e8e8e" stroke-width="1"/>
<line x1="326" y1="184.5" x2="331" y2="184.5" stroke="#d0d0d0" stroke-width="1.8"/>
<line x1="331.5" y1="200" x2="331.5" y2="205" stroke="#8e8e8e" stroke-width="1.2"/>
<line x1="565.5" y1="200" x2="565.5" y2="205" stroke="#8e8e8e" stroke-width="1.2"/>
<rect x="354.8" y="59.5" width="60.599999999999966" height="140.5" fill="url(#rg)" stroke="#000" stroke-width="1.4"/>
<rect x="415.4" y="91.60000000000002" width="62.60000000000002" height="108.39999999999998" fill="url(#gg)" stroke="#000" stroke-width="1.4"/>
<rect x="478" y="168" width="62.5" height="32" fill="url(#bg)" stroke="#000" stroke-width="1.4"/>
</svg>
<div class="t b2" style="left:303.24px;top:602.90px;font-size:12.40px;line-height:12.40px;color:#d8d8d4;font-weight:normal;transform:scaleX(1.0700);transform-origin:0 0;">104</div>
<div class="t b2" style="left:303.51px;top:636.90px;font-size:12.40px;line-height:12.40px;color:#d8d8d4;font-weight:normal;transform:scaleX(1.0700);transform-origin:0 0;">102</div>
<div class="t b2" style="left:303.37px;top:670.40px;font-size:12.40px;line-height:12.40px;color:#d8d8d4;font-weight:normal;transform:scaleX(1.0700);transform-origin:0 0;">100</div>
<div class="t b2" style="left:310.80px;top:705.20px;font-size:12.40px;line-height:12.40px;color:#d8d8d4;font-weight:normal;transform:scaleX(1.0700);transform-origin:0 0;">98</div>
<div class="t b2" style="left:310.80px;top:738.50px;font-size:12.40px;line-height:12.40px;color:#d8d8d4;font-weight:normal;transform:scaleX(1.0700);transform-origin:0 0;">96</div>
<div class="t b2" style="left:431.24px;top:764.13px;font-size:12.60px;line-height:12.60px;color:#d8d8d4;font-weight:normal;transform:scaleX(1.0600);transform-origin:0 0;">100%</div>
<div style="position:absolute;left:584.0px;top:560.5px;width:685.0px;height:223.5px;background:#141414"></div>
<div style="position:absolute;left:585.5px;top:562px;width:681.5px;height:26px;background:linear-gradient(#303030 0,#303030 45%,#181818 55%,#181818 100%)"></div>
<div style="position:absolute;left:585.5px;top:588px;width:681.5px;height:24.299999999999955px;background:#3f3f3f"></div>
<div style="position:absolute;left:585.5px;top:612.3px;width:681.5px;height:24.700000000000045px;background:#808080"></div>
<div style="position:absolute;left:585.5px;top:637px;width:681.5px;height:24px;background:#3f3f3f"></div>
<div style="position:absolute;left:585.5px;top:661px;width:681.5px;height:24px;background:#808080"></div>
<div style="position:absolute;left:585.5px;top:685px;width:681.5px;height:24px;background:#3f3f3f"></div>
<div style="position:absolute;left:585.5px;top:709px;width:681.5px;height:24.200000000000045px;background:#808080"></div>
<div style="position:absolute;left:585.5px;top:733.2px;width:681.5px;height:24.399999999999977px;background:#3f3f3f"></div>
<div style="position:absolute;left:585.5px;top:757.6px;width:681.5px;height:24.399999999999977px;background:#808080"></div>
<div class="t " style="left:603.20px;top:592.29px;font-size:16.20px;line-height:16.20px;color:#f2f2f2;font-weight:bold;transform:scaleX(1.2629);transform-origin:0 0;">x: CIE31</div>
<div class="t b2" style="left:774.17px;top:592.69px;font-size:16.90px;line-height:16.90px;color:#f2f2f2;font-weight:normal;transform:scaleX(1.2370);transform-origin:0 0;">0,3413</div>
<div class="t b2" style="left:873.67px;top:592.69px;font-size:16.90px;line-height:16.90px;color:#f2f2f2;font-weight:normal;transform:scaleX(1.2370);transform-origin:0 0;">0,3663</div>
<div class="t b2" style="left:973.27px;top:592.69px;font-size:16.90px;line-height:16.90px;color:#f2f2f2;font-weight:normal;transform:scaleX(1.2370);transform-origin:0 0;">0,3933</div>
<div class="t b2" style="left:1072.97px;top:592.69px;font-size:16.90px;line-height:16.90px;color:#f2f2f2;font-weight:normal;transform:scaleX(1.2390);transform-origin:0 0;">0,4199</div>
<div class="t b2" style="left:1172.77px;top:592.69px;font-size:16.90px;line-height:16.90px;color:#f2f2f2;font-weight:normal;transform:scaleX(1.2390);transform-origin:0 0;">0,4451</div>
<div class="t " style="left:603.20px;top:616.49px;font-size:16.20px;line-height:16.20px;color:#f2f2f2;font-weight:bold;transform:scaleX(1.2629);transform-origin:0 0;">y: CIE31</div>
<div class="t b2" style="left:774.17px;top:616.89px;font-size:16.90px;line-height:16.90px;color:#f2f2f2;font-weight:normal;transform:scaleX(1.2390);transform-origin:0 0;">0,3739</div>
<div class="t b2" style="left:873.67px;top:616.89px;font-size:16.90px;line-height:16.90px;color:#f2f2f2;font-weight:normal;transform:scaleX(1.2390);transform-origin:0 0;">0,4129</div>
<div class="t b2" style="left:973.27px;top:616.89px;font-size:16.90px;line-height:16.90px;color:#f2f2f2;font-weight:normal;transform:scaleX(1.2390);transform-origin:0 0;">0,4552</div>
<div class="t b2" style="left:1072.97px;top:616.89px;font-size:16.90px;line-height:16.90px;color:#f2f2f2;font-weight:normal;transform:scaleX(1.2349);transform-origin:0 0;">0,4970</div>
<div class="t b2" style="left:1172.77px;top:616.89px;font-size:16.90px;line-height:16.90px;color:#f2f2f2;font-weight:normal;transform:scaleX(1.2370);transform-origin:0 0;">0,5328</div>
<div class="t " style="left:602.98px;top:640.69px;font-size:16.20px;line-height:16.20px;color:#f2f2f2;font-weight:bold;transform:scaleX(1.3021);transform-origin:0 0;">Y</div>
<div class="t b2" style="left:773.83px;top:641.09px;font-size:16.90px;line-height:16.90px;color:#f2f2f2;font-weight:normal;transform:scaleX(1.2704);transform-origin:0 0;">206,0626</div>
<div class="t b2" style="left:873.33px;top:641.09px;font-size:16.90px;line-height:16.90px;color:#f2f2f2;font-weight:normal;transform:scaleX(1.2720);transform-origin:0 0;">204,1902</div>
<div class="t b2" style="left:972.93px;top:641.09px;font-size:16.90px;line-height:16.90px;color:#f2f2f2;font-weight:normal;transform:scaleX(1.2689);transform-origin:0 0;">202,3960</div>
<div class="t b2" style="left:1072.63px;top:641.09px;font-size:16.90px;line-height:16.90px;color:#f2f2f2;font-weight:normal;transform:scaleX(1.2689);transform-origin:0 0;">201,1720</div>
<div class="t b2" style="left:1172.43px;top:641.09px;font-size:16.90px;line-height:16.90px;color:#f2f2f2;font-weight:normal;transform:scaleX(1.2704);transform-origin:0 0;">205,0396</div>
<div class="t " style="left:603.09px;top:664.69px;font-size:16.20px;line-height:16.20px;color:#f2f2f2;font-weight:bold;transform:scaleX(1.3116);transform-origin:0 0;">Target x:CIE31</div>
<div class="t b2" style="left:774.17px;top:665.09px;font-size:16.90px;line-height:16.90px;color:#f2f2f2;font-weight:normal;transform:scaleX(1.2308);transform-origin:0 0;">0,3384</div>
<div class="t b2" style="left:873.67px;top:665.09px;font-size:16.90px;line-height:16.90px;color:#f2f2f2;font-weight:normal;transform:scaleX(1.2390);transform-origin:0 0;">0,3619</div>
<div class="t b2" style="left:973.27px;top:665.09px;font-size:16.90px;line-height:16.90px;color:#f2f2f2;font-weight:normal;transform:scaleX(1.2390);transform-origin:0 0;">0,3869</div>
<div class="t b2" style="left:1072.97px;top:665.09px;font-size:16.90px;line-height:16.90px;color:#f2f2f2;font-weight:normal;transform:scaleX(1.2390);transform-origin:0 0;">0,4127</div>
<div class="t b2" style="left:1172.77px;top:665.09px;font-size:16.90px;line-height:16.90px;color:#f2f2f2;font-weight:normal;transform:scaleX(1.2370);transform-origin:0 0;">0,4378</div>
<div class="t " style="left:603.09px;top:688.89px;font-size:16.20px;line-height:16.20px;color:#f2f2f2;font-weight:bold;transform:scaleX(1.3116);transform-origin:0 0;">Target y:CIE31</div>
<div class="t b2" style="left:774.17px;top:689.29px;font-size:16.90px;line-height:16.90px;color:#f2f2f2;font-weight:normal;transform:scaleX(1.2308);transform-origin:0 0;">0,3714</div>
<div class="t b2" style="left:873.67px;top:689.29px;font-size:16.90px;line-height:16.90px;color:#f2f2f2;font-weight:normal;transform:scaleX(1.2370);transform-origin:0 0;">0,4103</div>
<div class="t b2" style="left:973.27px;top:689.29px;font-size:16.90px;line-height:16.90px;color:#f2f2f2;font-weight:normal;transform:scaleX(1.2390);transform-origin:0 0;">0,4517</div>
<div class="t b2" style="left:1072.97px;top:689.29px;font-size:16.90px;line-height:16.90px;color:#f2f2f2;font-weight:normal;transform:scaleX(1.2308);transform-origin:0 0;">0,4944</div>
<div class="t b2" style="left:1172.77px;top:689.29px;font-size:16.90px;line-height:16.90px;color:#f2f2f2;font-weight:normal;transform:scaleX(1.2390);transform-origin:0 0;">0,5359</div>
<div class="t " style="left:603.09px;top:713.09px;font-size:16.20px;line-height:16.20px;color:#f2f2f2;font-weight:bold;transform:scaleX(1.3108);transform-origin:0 0;">Target Y</div>
<div class="t b2" style="left:773.83px;top:713.49px;font-size:16.90px;line-height:16.90px;color:#f2f2f2;font-weight:normal;transform:scaleX(1.2720);transform-origin:0 0;">204,5139</div>
<div class="t b2" style="left:873.33px;top:713.49px;font-size:16.90px;line-height:16.90px;color:#f2f2f2;font-weight:normal;transform:scaleX(1.2704);transform-origin:0 0;">200,8473</div>
<div class="t b2" style="left:972.38px;top:713.49px;font-size:16.90px;line-height:16.90px;color:#f2f2f2;font-weight:normal;transform:scaleX(1.2783);transform-origin:0 0;">197,7453</div>
<div class="t b2" style="left:1072.08px;top:713.49px;font-size:16.90px;line-height:16.90px;color:#f2f2f2;font-weight:normal;transform:scaleX(1.2783);transform-origin:0 0;">195,1626</div>
<div class="t b2" style="left:1171.88px;top:713.49px;font-size:16.90px;line-height:16.90px;color:#f2f2f2;font-weight:normal;transform:scaleX(1.2783);transform-origin:0 0;">193,0966</div>
<div class="t " style="left:602.41px;top:737.09px;font-size:16.20px;line-height:16.20px;color:#f2f2f2;font-weight:bold;transform:scaleX(1.3690);transform-origin:0 0;">ΔE 2000</div>
<div class="t b2" style="left:774.17px;top:737.49px;font-size:16.90px;line-height:16.90px;color:#f2f2f2;font-weight:normal;transform:scaleX(1.2390);transform-origin:0 0;">0,8607</div>
<div class="t b2" style="left:872.83px;top:737.49px;font-size:16.90px;line-height:16.90px;color:#f2f2f2;font-weight:normal;transform:scaleX(1.2358);transform-origin:0 0;">1,0821</div>
<div class="t b2" style="left:972.43px;top:737.49px;font-size:16.90px;line-height:16.90px;color:#f2f2f2;font-weight:normal;transform:scaleX(1.2358);transform-origin:0 0;">1,4092</div>
<div class="t b2" style="left:1072.13px;top:737.49px;font-size:16.90px;line-height:16.90px;color:#f2f2f2;font-weight:normal;transform:scaleX(1.2358);transform-origin:0 0;">1,6162</div>
<div class="t b2" style="left:1172.45px;top:737.49px;font-size:16.90px;line-height:16.90px;color:#f2f2f2;font-weight:normal;transform:scaleX(1.2432);transform-origin:0 0;">2,1955</div>
<div class="t " style="left:602.44px;top:761.29px;font-size:16.20px;line-height:16.20px;color:#f2f2f2;font-weight:bold;transform:scaleX(1.3249);transform-origin:0 0;">ΔE ITP</div>
<div class="t b2" style="left:773.34px;top:761.69px;font-size:16.90px;line-height:16.90px;color:#f2f2f2;font-weight:normal;transform:scaleX(1.2274);transform-origin:0 0;">1,7864</div>
<div class="t b2" style="left:873.35px;top:761.69px;font-size:16.90px;line-height:16.90px;color:#f2f2f2;font-weight:normal;transform:scaleX(1.2453);transform-origin:0 0;">2,8007</div>
<div class="t b2" style="left:973.59px;top:761.69px;font-size:16.90px;line-height:16.90px;color:#f2f2f2;font-weight:normal;transform:scaleX(1.2110);transform-origin:0 0;">4,3216</div>
<div class="t b2" style="left:1072.86px;top:761.69px;font-size:16.90px;line-height:16.90px;color:#f2f2f2;font-weight:normal;transform:scaleX(1.2411);transform-origin:0 0;">5,5702</div>
<div class="t b2" style="left:1172.45px;top:761.69px;font-size:16.90px;line-height:16.90px;color:#f2f2f2;font-weight:normal;transform:scaleX(1.2370);transform-origin:0 0;">6,7494</div>
<div class="t " style="left:799.74px;top:569.23px;font-size:13.90px;line-height:13.90px;color:#f2f2f2;font-weight:bold;transform:scaleX(1.3464);transform-origin:0 0;">20%</div>
<div class="t " style="left:899.42px;top:569.23px;font-size:13.90px;line-height:13.90px;color:#f2f2f2;font-weight:bold;transform:scaleX(1.3361);transform-origin:0 0;">40%</div>
<div class="t " style="left:998.84px;top:569.23px;font-size:13.90px;line-height:13.90px;color:#f2f2f2;font-weight:bold;transform:scaleX(1.3498);transform-origin:0 0;">60%</div>
<div class="t " style="left:1098.84px;top:569.23px;font-size:13.90px;line-height:13.90px;color:#f2f2f2;font-weight:bold;transform:scaleX(1.3464);transform-origin:0 0;">80%</div>
<div class="t " style="left:1192.27px;top:569.23px;font-size:13.90px;line-height:13.90px;color:#f2f2f2;font-weight:bold;transform:scaleX(1.4156);transform-origin:0 0;">100%</div>
<div style="position:absolute;left:0;top:803px;width:1557px;height:56px;background:linear-gradient(#4a4a4a,#2c2c2c)"></div>
<div style="position:absolute;left:41px;top:803px;width:8px;height:56px;background:linear-gradient(90deg,#3a3a3a,#262626 50%,#3a3a3a)"></div>
<div style="position:absolute;left:0;top:803px;width:42px;height:60px;border-radius:0 4px 0 0;background:linear-gradient(#ababab 0,#9c9c9c 25%,#7c7c7c 65%,#5e5e5e 100%)"></div>
<div style="position:absolute;left:12.3px;top:805.0px;width:14.4px;height:14.4px;border-radius:50%;background:linear-gradient(#7c7c7c,#b2b2b2)"></div>
<svg style="position:absolute;left:14px;top:808px" width="12" height="8"><path d="M1.5 6H10.5L6 1.2Z" fill="#262626"/></svg>
<div style="position:absolute;left:2px;top:829px;width:35px;height:28.5px;border-radius:4px;background:#ffff00;box-shadow:inset 0 1px 1px rgba(120,120,0,.6)"></div>
<div style="position:absolute;left:48px;top:803px;width:150px;height:60px;border-radius:5px 5px 0 0;background:linear-gradient(#ababab 0,#9c9c9c 25%,#7c7c7c 65%,#5e5e5e 100%)"></div>
<div style="position:absolute;left:53.5px;top:808px;width:139.5px;height:36px;border-radius:4px;background:#c1c2a1;box-shadow:inset 1px 1px 2px rgba(0,0,0,.25)"></div>
<div class="t b2" style="left:110.41px;top:849.92px;font-size:12.50px;line-height:12.50px;color:#2a2a2a;font-weight:normal;transform:scaleX(1.0000);transform-origin:0 0;">20%</div>
<div style="position:absolute;left:199.6px;top:803px;width:150px;height:60px;border-radius:5px 5px 0 0;background:linear-gradient(#ababab 0,#9c9c9c 25%,#7c7c7c 65%,#5e5e5e 100%)"></div>
<div style="position:absolute;left:205.1px;top:808px;width:139.5px;height:36px;border-radius:4px;background:#c2c283;box-shadow:inset 1px 1px 2px rgba(0,0,0,.25)"></div>
<div class="t b2" style="left:262.19px;top:849.92px;font-size:12.50px;line-height:12.50px;color:#2a2a2a;font-weight:normal;transform:scaleX(1.0000);transform-origin:0 0;">40%</div>
<div style="position:absolute;left:351.2px;top:803px;width:150px;height:60px;border-radius:5px 5px 0 0;background:linear-gradient(#ababab 0,#9c9c9c 25%,#7c7c7c 65%,#5e5e5e 100%)"></div>
<div style="position:absolute;left:356.7px;top:808px;width:139.5px;height:36px;border-radius:4px;background:#c3c15f;box-shadow:inset 1px 1px 2px rgba(0,0,0,.25)"></div>
<div class="t b2" style="left:413.61px;top:849.92px;font-size:12.50px;line-height:12.50px;color:#2a2a2a;font-weight:normal;transform:scaleX(1.0000);transform-origin:0 0;">60%</div>
<div style="position:absolute;left:503.6px;top:803px;width:150px;height:60px;border-radius:5px 5px 0 0;background:linear-gradient(#ababab 0,#9c9c9c 25%,#7c7c7c 65%,#5e5e5e 100%)"></div>
<div style="position:absolute;left:509.1px;top:808px;width:139.5px;height:36px;border-radius:4px;background:#c1bf4e;box-shadow:inset 1px 1px 2px rgba(0,0,0,.25)"></div>
<div class="t b2" style="left:566.07px;top:849.92px;font-size:12.50px;line-height:12.50px;color:#2a2a2a;font-weight:normal;transform:scaleX(1.0000);transform-origin:0 0;">80%</div>
<div style="position:absolute;left:656.4px;top:803px;width:149.6px;height:60px;border-radius:5px 5px 0 0;background:linear-gradient(#1c1c1c,#2a2a2a 60%,#333)"></div>
<div style="position:absolute;left:661.9px;top:808px;width:140px;height:36px;border-radius:4px;background:#c4c000;box-shadow:inset 1px 1px 2px rgba(0,0,0,.25)"></div>
<div class="t " style="left:715.18px;top:849.92px;font-size:12.50px;line-height:12.50px;color:#ffffff;font-weight:bold;transform:scaleX(1.0000);transform-origin:0 0;">100%</div>
<div style="position:absolute;left:1228px;top:803px;width:12px;height:56px;background:linear-gradient(90deg,#333,#2a2a2a)"></div>
<div style="position:absolute;left:1239px;top:803px;width:48px;height:18px;border-radius:4px 4px 0 0;background:linear-gradient(#ababab,#8a8a8a)"></div>
<div style="position:absolute;left:1239px;top:821px;width:48px;height:1.5px;background:#2e2e2e"></div>
<div style="position:absolute;left:1239px;top:822.5px;width:48px;height:40px;background:linear-gradient(#a4a4a4,#7a7a7a)"></div>
<div style="position:absolute;left:1256.2px;top:804.6px;width:14.4px;height:14.4px;border-radius:50%;background:linear-gradient(#7c7c7c,#b2b2b2)"></div>
<svg style="position:absolute;left:1258px;top:808px" width="12" height="8"><path d="M1.5 6H10.5L6 1.2Z" fill="#262626"/></svg>
<div style="position:absolute;left:1247.2px;top:827.1px;width:31.3px;height:31px;border-radius:5px;border:2px solid #262626;background:linear-gradient(#b8b8b8 0,#b8b8b8 50%,#a2a2a2 50%,#a2a2a2 100%)"></div>
<div style="position:absolute;left:1256.2px;top:836.2px;width:13.6px;height:13.2px;background:linear-gradient(#222 0,#222 50%,#000 50%,#000 100%)"></div>
<div style="position:absolute;left:1288px;top:803px;width:269px;height:30px;border-radius:4px 0 0 0;background:linear-gradient(#b0b0b0,#7c7c7c)"></div>
<div style="position:absolute;left:1333.7px;top:803px;width:1.4px;height:30px;background:#2a2a2a"></div>
<div style="position:absolute;left:1378.6px;top:803px;width:1.4px;height:30px;background:#2a2a2a"></div>
<div style="position:absolute;left:1423.6px;top:803px;width:1.4px;height:30px;background:#2a2a2a"></div>
<div style="position:absolute;left:1468.5px;top:803px;width:1.4px;height:30px;background:#2a2a2a"></div>
<div style="position:absolute;left:1513.7px;top:803px;width:1.4px;height:30px;background:#2a2a2a"></div>
<div style="position:absolute;left:1288px;top:832.6px;width:269px;height:1.6px;background:#2a2a2a"></div>
<div style="position:absolute;left:1300.8px;top:807.9px;width:20px;height:20px;border-radius:50%;background:linear-gradient(#7c7c7c,#b2b2b2)"></div>
<div style="position:absolute;left:1346.8px;top:807.9px;width:20px;height:20px;border-radius:50%;background:linear-gradient(#7c7c7c,#b2b2b2)"></div>
<div style="position:absolute;left:1391.8px;top:807.9px;width:20px;height:20px;border-radius:50%;background:linear-gradient(#7c7c7c,#b2b2b2)"></div>
<div style="position:absolute;left:1436.8px;top:807.9px;width:20px;height:20px;border-radius:50%;background:linear-gradient(#7c7c7c,#b2b2b2)"></div>
<div style="position:absolute;left:1482.0px;top:807.9px;width:20px;height:20px;border-radius:50%;background:linear-gradient(#7c7c7c,#b2b2b2)"></div>
<div style="position:absolute;left:1528.0px;top:807.9px;width:20px;height:20px;border-radius:50%;background:linear-gradient(#7c7c7c,#b2b2b2)"></div>
<div style="position:absolute;left:1307px;top:814px;width:8px;height:8px;background:#2a2a2a"></div>
<svg style="position:absolute;left:1350px;top:810px" width="16" height="16"><path d="M4.2 2.8V13.4L12.7 8.1Z" fill="#2a2a2a"/></svg>
<svg style="position:absolute;left:1392px;top:808px" width="20" height="20"><path d="M6.6 5.6H4.7V14.4H6.6M13.4 5.6H15.3V14.4H13.4" fill="none" stroke="#2a2a2a" stroke-width="2"/><rect x="7.9" y="9.3" width="1.7" height="1.7" fill="#2a2a2a"/><rect x="10.6" y="9.3" width="1.7" height="1.7" fill="#2a2a2a"/></svg>
<svg style="position:absolute;left:1436px;top:808px" width="22" height="20"><path d="M11 10C8.5 6.5 4 6.5 4 10S8.5 13.5 11 10S17.5 6.5 17.5 10S13.5 13.5 11 10Z" fill="none" stroke="#2a2a2a" stroke-width="1.8"/></svg>
<svg style="position:absolute;left:1482px;top:808px" width="20" height="20"><path d="M4.8 9.2A5.2 5.2 0 0 1 14 6.2M15.2 10.8A5.2 5.2 0 0 1 6 13.8" fill="none" stroke="#2a2a2a" stroke-width="2"/><path d="M12 3.4L15.6 3.6L15.2 7.6Z M8 16.6L4.4 16.4L4.8 12.4Z" fill="#2a2a2a"/></svg>
<div style="position:absolute;left:1288px;top:834px;width:269px;height:30px;border-radius:5px 0 0 0;background:linear-gradient(#b0b0b0,#8a8a8a)"></div>
<div style="position:absolute;left:1423.6px;top:834px;width:1.4px;height:30px;background:#2a2a2a"></div>
<div style="position:absolute;left:1308.7px;top:838.7px;width:20px;height:20px;border-radius:50%;background:linear-gradient(#7c7c7c,#b2b2b2)"></div>
<div style="position:absolute;left:1521.8px;top:838.6px;width:20px;height:20px;border-radius:50%;background:linear-gradient(#7c7c7c,#b2b2b2)"></div>
<svg style="position:absolute;left:1308px;top:838px" width="22" height="22"><path d="M10 5.8L6 10.8L10 15.8M14.4 5.8L10.4 10.8L14.4 15.8" fill="none" stroke="#2a2a2a" stroke-width="1.5"/></svg>
<svg style="position:absolute;left:1521px;top:838px" width="22" height="22"><path d="M7.2 5.8L11.2 10.8L7.2 15.8M11.6 5.8L15.6 10.8L11.6 15.8" fill="none" stroke="#2a2a2a" stroke-width="1.5"/></svg>
<div class="t b" style="left:1343.84px;top:837.57px;font-size:23.55px;line-height:23.55px;color:#2a2a2a;font-weight:normal;transform:scaleX(0.9896);transform-origin:0 0;">Back</div>
<div class="t b" style="left:1450.73px;top:837.64px;font-size:23.11px;line-height:23.11px;color:#2a2a2a;font-weight:normal;transform:scaleX(1.1196);transform-origin:0 0;">Next</div>
<script>
(function(){
var L=[[0.1741,0.0050],[0.1740,0.0050],[0.1738,0.0049],[0.1736,0.0049],[0.1733,0.0048],[0.1730,0.0048],[0.1726,0.0048],[0.1721,0.0048],[0.1714,0.0051],[0.1703,0.0058],[0.1689,0.0069],[0.1669,0.0086],[0.1644,0.0109],[0.1611,0.0138],[0.1566,0.0177],[0.1510,0.0227],[0.1440,0.0297],[0.1355,0.0399],[0.1241,0.0578],[0.1096,0.0868],[0.0913,0.1327],[0.0687,0.2007],[0.0454,0.2950],[0.0235,0.4127],[0.0082,0.5384],[0.0039,0.6548],[0.0139,0.7502],[0.0389,0.8120],[0.0743,0.8338],[0.1142,0.8262],[0.1547,0.8059],[0.1929,0.7816],[0.2296,0.7543],[0.2658,0.7243],[0.3016,0.6923],[0.3373,0.6589],[0.3731,0.6245],[0.4087,0.5896],[0.4441,0.5547],[0.4788,0.5202],[0.5125,0.4866],[0.5448,0.4544],[0.5752,0.4242],[0.6029,0.3965],[0.6270,0.3725],[0.6482,0.3514],[0.6658,0.3340],[0.6801,0.3197],[0.6915,0.3083],[0.7006,0.2993],[0.7079,0.2920],[0.7140,0.2859],[0.7190,0.2809],[0.7230,0.2770],[0.7260,0.2740],[0.7283,0.2717],[0.7300,0.2700],[0.7311,0.2689],[0.7320,0.2680],[0.7334,0.2666],[0.7344,0.2656],[0.7347,0.2653]];
function uv(x,y){var d=-2*x+12*y+3;return [4*x/d,9*y/d];}
var LU0=L.map(function(p){return uv(p[0],p[1]);});
var LU=[];(function(){var n=LU0.length;for(var i=0;i<n-1;i++){var p0=LU0[Math.max(0,i-1)],p1=LU0[i],p2=LU0[i+1],p3=LU0[Math.min(n-1,i+2)];for(var k=0;k<6;k++){var t=k/6,t2=t*t,t3=t2*t;LU.push([0.5*((2*p1[0])+(-p0[0]+p2[0])*t+(2*p0[0]-5*p1[0]+4*p2[0]-p3[0])*t2+(-p0[0]+3*p1[0]-3*p2[0]+p3[0])*t3),0.5*((2*p1[1])+(-p0[1]+p2[1])*t+(2*p0[1]-5*p1[1]+4*p2[1]-p3[1])*t2+(-p0[1]+3*p1[1]-3*p2[1]+p3[1])*t3)]);}}LU.push(LU0[n-1]);})();
var TRI=[[0.680,0.320],[0.265,0.690],[0.150,0.060]];
var TU=TRI.map(function(p){return uv(p[0],p[1]);});
function sgn(p,a,b){return (p[0]-b[0])*(a[1]-b[1])-(a[0]-b[0])*(p[1]-b[1]);}
var TOFF=0.0019;function inTri(p,t){var d1=sgn(p,[t[0][0],t[0][1]+TOFF],[t[1][0],t[1][1]+TOFF]),d2=sgn(p,t[1],t[2]),d3=sgn(p,t[2],t[0]);var n=(d1<0)||(d2<0)||(d3<0),q=(d1>0)||(d2>0)||(d3>0);return !(n&&q);}
function inPoly(p,poly){var c=false;for(var i=0,j=poly.length-1;i<poly.length;j=i++){var a=poly[i],b=poly[j];if(((a[1]>p[1])!=(b[1]>p[1]))&&(p[0]<(b[0]-a[0])*(p[1]-a[1])/(b[1]-a[1])+a[0]))c=!c;}return c;}
var GP=window.CIE_G||1.0;function gam(c){c=Math.max(0,c);return Math.pow(c,1/GP);}
var DIM=window.CIE_DIM||0.6;
function col(x,y,inside){
  var X=x/y,Y=1,Z=(1-x-y)/y;
  var r=2.4934969*X-0.9313836*Y-0.4027108*Z, g=-0.8294890*X+1.7626641*Y+0.0236247*Z, b=0.0358458*X-0.0761724*Y+0.9568845*Z;
  r=Math.max(0,r);g=Math.max(0,g);b=Math.max(0,b);
  var m=Math.max(r,g,b);r/=m;g/=m;b/=m;
  var k=inside?1:DIM;
  return [gam(r)*255*k,gam(g)*255*k,gam(b)*255*k];
}
var cv=document.getElementById('cie');
function render(cv, OX, OY, mapf, bgc){
  var ctx=cv.getContext('2d');var w=cv.width,h=cv.height;var im=ctx.createImageData(w,h);var d=im.data;
  var N=4;
  for(var j=0;j<h;j++){for(var i=0;i<w;i++){
    var o=(j*w+i)*4;
    var pc=mapf(OX+i+0.5,OY+j+0.5);
    // corner tests
    var c00=mapf(OX+i,OY+j),c10=mapf(OX+i+1,OY+j),c01=mapf(OX+i,OY+j+1),c11=mapf(OX+i+1,OY+j+1);
    var pl=[inPoly(c00[2],LU),inPoly(c10[2],LU),inPoly(c01[2],LU),inPoly(c11[2],LU),inPoly(pc[2],LU)];
    var pt=[inTri(c00[2],TU),inTri(c10[2],TU),inTri(c01[2],TU),inTri(c11[2],TU),inTri(pc[2],TU)];
    var allL=pl[0]&&pl[1]&&pl[2]&&pl[3]&&pl[4], noneL=!(pl[0]||pl[1]||pl[2]||pl[3]||pl[4]);
    var allT=pt[0]&&pt[1]&&pt[2]&&pt[3]&&pt[4], noneT=!(pt[0]||pt[1]||pt[2]||pt[3]||pt[4]);
    if(noneL){ if(bgc){d[o]=bgc[0];d[o+1]=bgc[1];d[o+2]=bgc[2];d[o+3]=255;} continue; }
    var cb=col(pc[0],pc[1],true), cd=col(pc[0],pc[1],false);
    var covL=1, covT=allT?1:0;
    if(!(allL&&(allT||noneT))){
      var nl=0,nt=0;
      for(var b=0;b<N;b++){for(var a=0;a<N;a++){
        var q=mapf(OX+i+(a+0.5)/N,OY+j+(b+0.5)/N);
        if(inPoly(q[2],LU)){nl++; if(inTri(q[2],TU))nt++;}
      }}
      covL=nl/(N*N); covT=nl>0?nt/nl:0;
    }
    var r=cb[0]*covT+cd[0]*(1-covT), g=cb[1]*covT+cd[1]*(1-covT), bl=cb[2]*covT+cd[2]*(1-covT);
    if(bgc){
      d[o]=r*covL+bgc[0]*(1-covL);d[o+1]=g*covL+bgc[1]*(1-covL);d[o+2]=bl*covL+bgc[2]*(1-covL);d[o+3]=255;
    } else {
      d[o]=r;d[o+1]=g;d[o+2]=bl;d[o+3]=255*covL;
    }
  }}
  ctx.putImageData(im,0,0);
}
if(cv&&cv.getContext){
  TOFF=0.0019;render(cv, 952, 59, function(X,Y){var u=(X-951.5)/998.0, v=(519.6-Y)/767.0; var dd=6*u-16*v+12; return [9*u/dd,4*v/dd,[u,v]];}, [35,35,35]);
}
var ci=document.getElementById('ins');
if(ci&&ci.getContext){
  TOFF=0;var cx=0.4378,cy=0.5359,sx=199/0.05,sy=135/0.05;
  render(ci, 1347.5, 378.5, function(X,Y){var x=cx+(X-1445.5)/sx, y=cy-(Y-444.8)/sy; return [x,y,uv(x,y)];}, [35,35,35]);
}
})();
</script>
</body></html>
